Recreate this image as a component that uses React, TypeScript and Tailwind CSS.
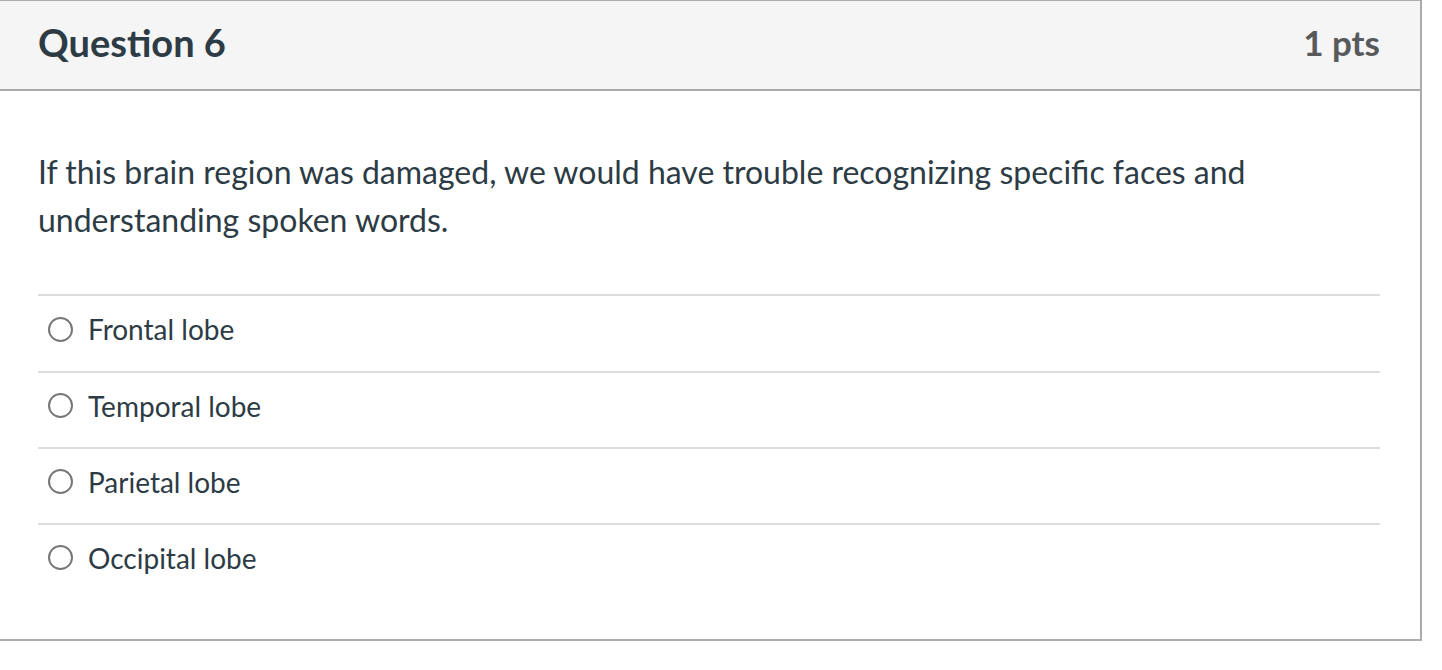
export default function App() {
  const answers = ["Frontal lobe", "Temporal lobe", "Parietal lobe", "Occipital lobe"];
  return (
    <div
      className="min-h-[670px] bg-white"
      style={{ fontFamily: "Lato, 'Noto Sans', sans-serif" }}
    >
      <div className="w-[1422px] border-t border-r-2 border-b-2 border-[#ababab] bg-white">
        <div className="flex h-[90px] items-center justify-between border-b-2 border-[#ababab] bg-[#f5f5f5] pb-[6px] pl-[38px] pr-[40px]">
          <h2 className="text-[38px] font-bold text-[#2d3b45]">Question 6</h2>
          <span className="text-[35px] font-bold text-[#58595b]">1 pts</span>
        </div>
        <div className="px-[38px] pt-[57px] pb-[40px]">
          <p className="text-[32px] leading-[48px] text-[#2d3b45]">
            If this brain region was damaged, we would have trouble recognizing specific faces and
            understanding spoken words.
          </p>
          <div className="mt-[50px] w-[1342px]">
            {answers.map((a, i) => (
              <div
                key={a}
                className={`flex items-center gap-[15px] border-t-2 border-[#dcdcdc] pb-[9px] pl-[10px] ${
                  i === 0 ? "h-[77px]" : "h-[76px]"
                }`}
              >
                <span className="h-[25px] w-[25px] rounded-full border-2 border-[#777777] bg-white" />
                <span className="text-[28px] text-[#2d3b45]">{a}</span>
              </div>
            ))}
          </div>
        </div>
      </div>
    </div>
  );
}
